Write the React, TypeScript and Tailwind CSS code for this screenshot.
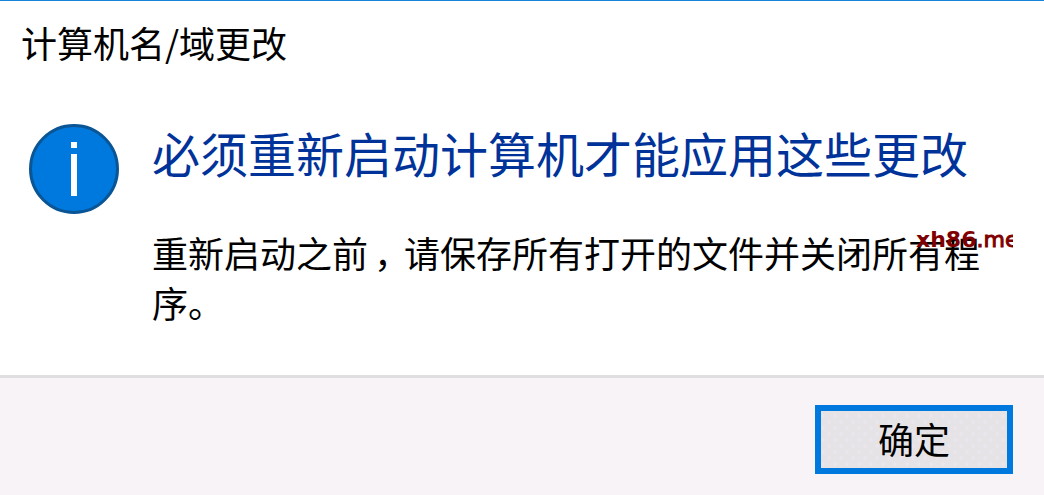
import type { ReactNode } from "react";

function InfoIcon() {
  return (
    <svg viewBox="0 0 90 90" className="block h-[90px] w-[90px]" aria-hidden="true">
      <circle cx="45" cy="45" r="43.5" fill="#0079de" stroke="#0a5595" strokeWidth="3" />
      <rect x="42" y="18" width="6" height="6" fill="#fff" />
      <rect x="42" y="30" width="6" height="42" fill="#fff" />
    </svg>
  );
}

function DialogButton({ children }: { children: ReactNode }) {
  return (
    <button className="h-[69px] w-[198px] border-6 border-[#0079de] bg-[#e6e3e6] bg-[radial-gradient(circle,#ebe5ee_1.5px,transparent_2px),radial-gradient(circle,#ebe5ee_1.5px,transparent_2px)] bg-size-[12px_12px] bg-position-[-4px_-1px,2px_5px] pb-[4px] text-[36px] leading-none text-black">
      {children}
    </button>
  );
}

export default function App() {
  return (
    <div className="relative flex h-[495px] w-[1044px] flex-col overflow-hidden border-t border-[#1883d7] bg-white font-['Noto_Sans_CJK_SC',sans-serif]">
      <header className="pt-[15px] pl-[21px] text-[36px] leading-[52px] whitespace-nowrap text-black">
        计算机名/域更改
      </header>
      <main className="flex h-[307px] shrink-0 pt-[56px] pl-[29px]">
        <InfoIcon />
        <div className="-mt-1 ml-[33px]">
          <h1 className="text-[48px] leading-[64px] font-normal whitespace-nowrap text-[#003399]">
            必须重新启动计算机才能应用这些更改
          </h1>
          <p className="mt-[43px] text-[36px] leading-[50px] whitespace-nowrap text-black">
            重新启动之前<span className="relative left-1.5">，</span>请保存所有打开的文件并关闭所有程
            <br />
            序。
          </p>
        </div>
      </main>
      <footer className="flex flex-1 justify-end border-t-3 border-[#e1dee1] bg-[#f7f3f7] pt-[27px] pr-[31px]">
        <DialogButton>确定</DialogButton>
      </footer>
      <span className="absolute top-[227px] left-[916px] w-[97px] overflow-hidden font-['DejaVu_Sans',sans-serif] text-[22px] leading-6 whitespace-nowrap text-[#800000]">
        <b>xh86</b>
        <span className="[-webkit-text-stroke:1px_#800000]">.me</span>
      </span>
    </div>
  );
}
